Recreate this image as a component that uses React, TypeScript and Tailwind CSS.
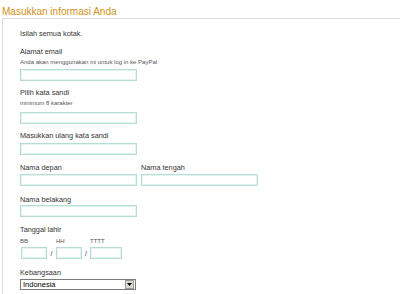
function Field({ className = "" }: { className?: string }) {
  return (
    <div
      className={`h-[12px] border border-[#b4ddd6] bg-white shadow-[inset_0_0_0_1px_#e6f3f1] ${className}`}
    />
  );
}

function Label({ children, className = "" }: { children: React.ReactNode; className?: string }) {
  return <div className={`text-[7.3px] leading-[9px] text-[#333] ${className}`}>{children}</div>;
}

function Hint({ children, className = "" }: { children: React.ReactNode; className?: string }) {
  return <div className={`text-[6px] leading-[8px] text-[#555] ${className}`}>{children}</div>;
}

export default function App() {
  return (
    <div
      className="w-[400px] h-[294px] overflow-hidden bg-white"
      style={{ fontFamily: '"Liberation Sans", Arial, sans-serif' }}
    >
      <h1 className="pl-[2px] pt-[5px] text-[10px] leading-[13px] text-[#cf9216]">
        Masukkan informasi Anda
      </h1>

      <div className="ml-[2px] h-full border-t border-l border-[#dcdcdc] pl-[17px] pt-[10px]">
        <Label>Isilah semua kotak.</Label>

        <Label className="mt-[9px]">Alamat email</Label>
        <Hint className="mt-[1.5px]">Anda akan menggunakan ini untuk log in ke PayPal</Hint>
        <Field className="mt-[3px] w-[117px]" />

        <Label className="mt-[7px]">Pilih kata sandi</Label>
        <Hint className="mt-[2px]">minimum 8 karakter</Hint>
        <Field className="mt-[5px] w-[117px]" />

        <Label className="mt-[7.5px]">Masukkan ulang kata sandi</Label>
        <Field className="mt-[2.5px] w-[117px]" />

        <div className="mt-[8.5px] flex gap-[4px]">
          <div>
            <Label>Nama depan</Label>
            <Field className="mt-[1.5px] w-[117px]" />
          </div>
          <div>
            <Label>Nama tengah</Label>
            <Field className="mt-[1.5px] w-[117px]" />
          </div>
        </div>

        <Label className="mt-[9px]">Nama belakang</Label>
        <Field className="mt-[1px] w-[117px]" />

        <Label className="mt-[8.5px]">Tanggal lahir</Label>
        <div className="mt-[3px] flex">
          <Hint className="w-[36px]">BB</Hint>
          <Hint className="w-[34px]">HH</Hint>
          <Hint>TTTT</Hint>
        </div>
        <div className="mt-[2px] flex items-center">
          <Field className="ml-[1px] w-[26px]" />
          <span className="w-[9px] text-center text-[7px] leading-[9px] text-[#333]">/</span>
          <Field className="w-[26px]" />
          <span className="w-[8px] text-center text-[7px] leading-[9px] text-[#333]">/</span>
          <Field className="w-[32px]" />
        </div>

        <Label className="mt-[8.5px]">Kebangsaan</Label>
        <div className="mt-[2.5px] flex h-[11px] w-[116px] items-center border border-[#7a7a7a] bg-white">
          <span className="flex-1 pl-[2px] text-[7.5px] leading-[9px] text-black">Indonesia</span>
          <span className="mr-px flex h-[9px] w-[9px] items-center justify-center border border-[#9a9a9a] bg-[#dcd8d0]">
            <svg width="5" height="3" viewBox="0 0 5 3">
              <path d="M0 0h5L2.5 3z" fill="#000" />
            </svg>
          </span>
        </div>
      </div>
    </div>
  );
}
